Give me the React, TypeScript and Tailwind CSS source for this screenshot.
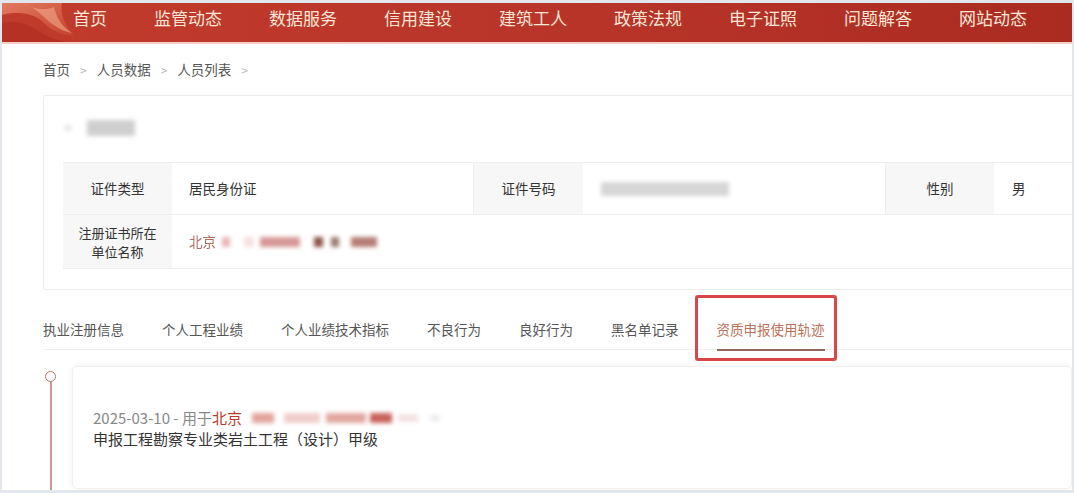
import React from "react";

const navItems = ["首页", "监管动态", "数据服务", "信用建设", "建筑工人", "政策法规", "电子证照", "问题解答", "网站动态"];
const tabs = ["执业注册信息", "个人工程业绩", "个人业绩技术指标", "不良行为", "良好行为", "黑名单记录", "资质申报使用轨迹"];
const crumbs = ["首页", "人员数据", "人员列表"];

function Flag() {
  return (
    <svg className="absolute left-0 top-0" width="90" height="39" viewBox="0 0 90 39">
      <defs>
        <linearGradient id="fl" x1="0" y1="0" x2="1" y2="1">
          <stop offset="0" stopColor="#e9866a" />
          <stop offset="1" stopColor="#c4432f" />
        </linearGradient>
      </defs>
      <path d="M0 0 L60 0 C58 10 62 22 72 32 C60 34 48 26 40 18 C30 10 14 8 0 12 Z" fill="url(#fl)" opacity="0.85" />
      <path d="M20 0 C30 6 44 8 52 4 C54 14 60 24 70 30 C58 28 48 20 40 12 C34 6 26 2 20 0 Z" fill="#f2a98a" opacity="0.6" />
      <path d="M0 20 C14 16 28 22 40 30 C46 34 56 38 66 39 L0 39 Z" fill="#a9271c" opacity="0.5" />
    </svg>
  );
}

function Blur({ className }: { className: string }) {
  return <span className={"inline-block blur-[2px] " + className} />;
}

export default function App() {
  return (
    <div
      className="w-[1074px] h-[493px] overflow-hidden bg-[#e2e7ed] pt-[3px] pl-[2px] pr-[2px] pb-[3px]"
      style={{ fontFamily: '"Noto Sans CJK SC", "Noto Sans", sans-serif' }}
    >
      <div className="h-full bg-white flex flex-col overflow-hidden">
        {/* nav */}
        <div className="relative h-[39px] shrink-0 bg-gradient-to-r from-[#c13b2c] via-[#b9352a] to-[#ab2b21]">
          <Flag />
          <div className="relative flex gap-[47px] pl-[71px] pt-[2px] text-[17px] leading-[26px] text-[#f6e6d6]">
            {navItems.map((n) => (
              <span key={n}>{n}</span>
            ))}
          </div>
        </div>
        <div className="h-[2px] shrink-0 bg-[#f3cfc6]" />

        {/* breadcrumb */}
        <div className="h-[51px] shrink-0 flex items-center pl-[41px] text-[13.5px] text-[#555]">
          {crumbs.map((c) => (
            <React.Fragment key={c}>
              <span>{c}</span>
              <span className="mx-[10px] text-[#bbb] text-[12px]">&gt;</span>
            </React.Fragment>
          ))}
        </div>

        {/* info card */}
        <div className="ml-[41px] w-[1060px] shrink-0 border border-[#ececec] rounded-[3px] pt-[22px] pl-[19px] pb-[20px]">
          <div className="h-[20px] flex items-center gap-[16px] pl-[2px]">
            <Blur className="w-[6px] h-[4px] bg-[#ddd]" />
            <Blur className="w-[48px] h-[16px] bg-[#cfcfcf]" />
          </div>
          <div className="mt-[24px] text-[13.5px] text-[#333]">
            <div className="flex h-[53px] border-t border-b border-[#eeeeee]">
              <div className="w-[109px] bg-[#f7f7f7] flex items-center justify-center">证件类型</div>
              <div className="w-[302px] flex items-center pl-[17px] border-r border-[#eeeeee]">居民身份证</div>
              <div className="w-[109px] bg-[#f7f7f7] flex items-center justify-center">证件号码</div>
              <div className="w-[303px] flex items-center pl-[18px] border-r border-[#eeeeee]">
                <Blur className="w-[128px] h-[14px] bg-[#d6d6d6]" />
              </div>
              <div className="w-[108px] bg-[#f7f7f7] flex items-center justify-center">性别</div>
              <div className="flex-1 flex items-center pl-[18px]">男</div>
            </div>
            <div className="flex h-[54px] border-b border-[#eeeeee]">
              <div className="w-[109px] bg-[#f7f7f7] flex items-center justify-center text-center text-[13px] leading-[19px]">
                <span>
                  注册证书所在
                  <br />
                  单位名称
                </span>
              </div>
              <div className="flex-1 flex items-center pl-[17px] gap-[6px]">
                <span className="text-[#b46c5e] blur-[0.6px]">北京</span>
                <Blur className="w-[8px] h-[10px] bg-[#eab5b5]" />
                <Blur className="w-[10px] h-[10px] bg-[#f6e0e0] ml-[8px]" />
                <Blur className="w-[40px] h-[10px] bg-[#d79797]" />
                <Blur className="w-[9px] h-[10px] bg-[#8e5248] ml-[8px]" />
                <Blur className="w-[8px] h-[10px] bg-[#9b7a70] ml-[2px]" />
                <Blur className="w-[26px] h-[10px] bg-[#b57b73] ml-[6px]" />
              </div>
            </div>
          </div>
        </div>

        {/* tabs */}
        <div className="ml-[41px] mt-[19px] w-[1060px] shrink-0 flex gap-[38px] border-b border-[#f0f0f0] text-[13.5px] text-[#555]">
          {tabs.map((t, i) => {
            const active = i === tabs.length - 1;
            return (
              <div key={t} className={"relative h-[40px] flex items-center " + (active ? "text-[#bb7158]" : "")}>
                {t}
                {active && (
                  <>
                    <span className="absolute left-0 right-0 bottom-[-2px] h-[2px] bg-[#8f6a5c]" />
                    <span className="absolute -left-[22px] -right-[12px] -top-[14px] -bottom-[12px] border-[3px] border-[#d9474a] rounded-[3px]" />
                  </>
                )}
              </div>
            );
          })}
        </div>

        {/* timeline */}
        <div className="flex flex-1 mt-[16px] pl-[43px]">
          <div className="relative w-[10px] shrink-0">
            <span className="absolute left-0 top-[5px] w-[11px] h-[11px] rounded-full border-[1.5px] border-[#b6776d] bg-white" />
            <span className="absolute left-[4.5px] top-[16px] bottom-0 w-[2px] bg-[#c89b8c]" />
          </div>
          <div className="ml-[17px] w-[1010px] mb-[1px] bg-white border border-[#f0f0f0] rounded-[5px] shadow-[0_0_6px_rgba(0,0,0,0.06)] pl-[20px] pt-[40px] text-[15px] leading-[21px]">
            <div className="flex items-center text-[#888]">
              <span>2025-03-10 - 用于</span>
              <span className="text-[#c0392b]">北京</span>
              <Blur className="ml-[10px] w-[22px] h-[10px] bg-[#e3a49a]" />
              <Blur className="ml-[10px] w-[36px] h-[10px] bg-[#f0cfcb]" />
              <Blur className="ml-[6px] w-[40px] h-[10px] bg-[#e1a8a0]" />
              <Blur className="ml-[4px] w-[22px] h-[10px] bg-[#c8625a]" />
              <Blur className="ml-[6px] w-[20px] h-[8px] bg-[#f3e3e0]" />
              <Blur className="ml-[12px] w-[10px] h-[6px] bg-[#ececec]" />
            </div>
            <div className="text-[#333]">申报工程勘察专业类岩土工程（设计）甲级</div>
          </div>
        </div>
      </div>
    </div>
  );
}
